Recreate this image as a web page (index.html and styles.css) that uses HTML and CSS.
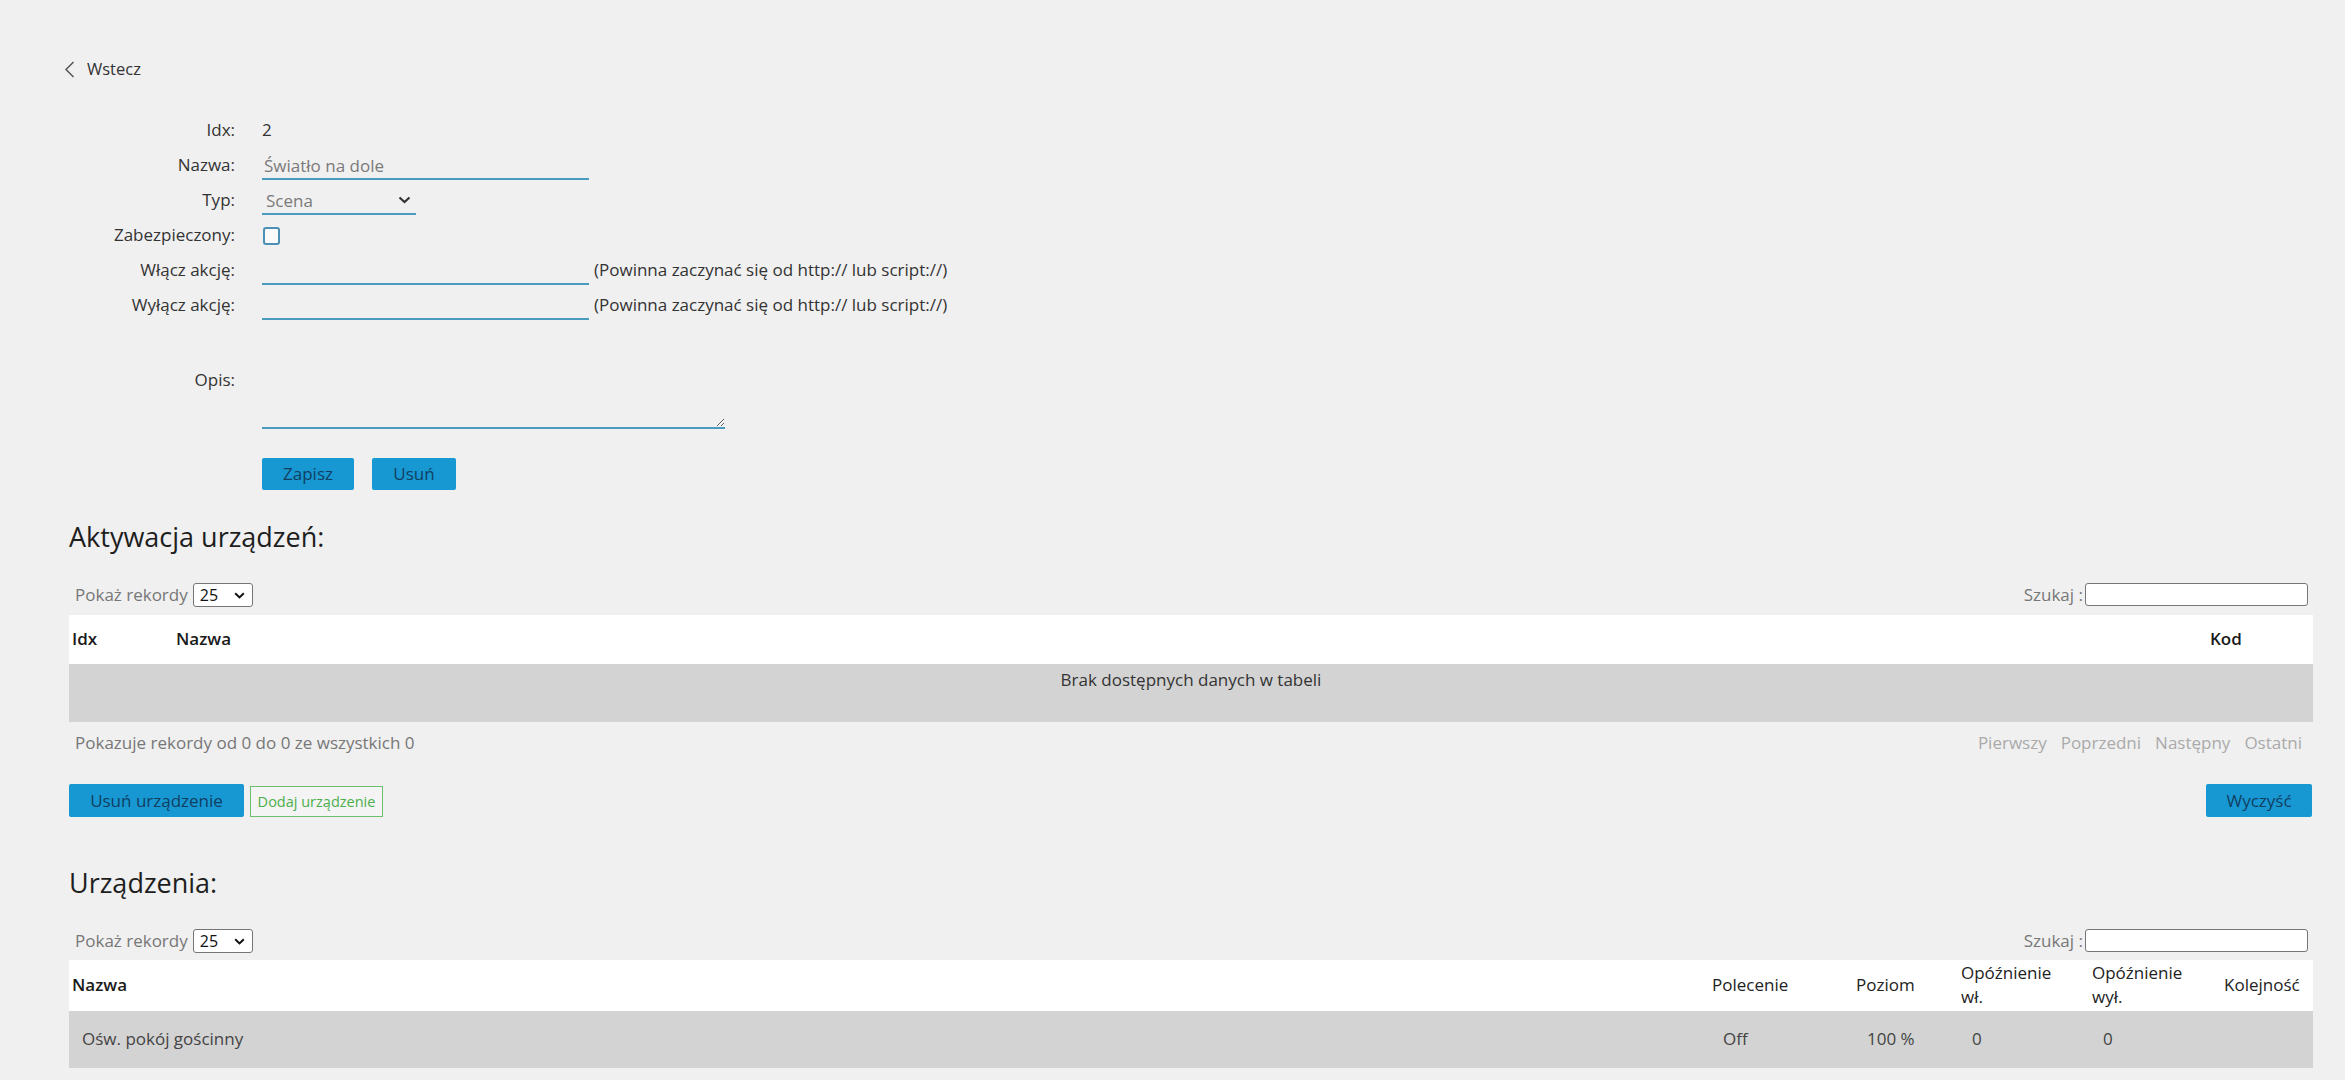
FILE: index.html
```html
<!DOCTYPE html>
<html lang="pl">
<head>
<meta charset="utf-8">
<title>Scena</title>
<link rel="stylesheet" href="styles.css">
</head>
<body>
<div class="page">
  <a class="back" href="#">
    <svg class="back-icon" width="11" height="17" viewBox="0 0 11 17"><path d="M9.5 1 L2 8.5 L9.5 16" fill="none" stroke="#555" stroke-width="1.5"/></svg>
    <span>Wstecz</span>
  </a>

  <div class="form">
    <div class="lbl">Idx:</div>
    <div class="val">2</div>

    <div class="lbl">Nazwa:</div>
    <div class="val"><input class="line-input" type="text" value="Światło na dole"></div>

    <div class="lbl">Typ:</div>
    <div class="val">
      <span class="sel-wrap">
        <select class="line-select"><option>Scena</option><option>Grupa</option></select>
        <svg class="sel-chev" width="13" height="8" viewBox="0 0 13 8"><path d="M1.5 1.5 L6.5 6 L11.5 1.5" fill="none" stroke="#333" stroke-width="2.2"/></svg>
      </span>
    </div>

    <div class="lbl">Zabezpieczony:</div>
    <div class="val"><span class="checkbox"></span></div>

    <div class="lbl">Włącz akcję:</div>
    <div class="val"><input class="line-input" type="text"><span class="hint">(Powinna zaczynać się od http:// lub script://)</span></div>

    <div class="lbl">Wyłącz akcję:</div>
    <div class="val"><input class="line-input" type="text"><span class="hint">(Powinna zaczynać się od http:// lub script://)</span></div>

    <div class="lbl lbl-opis">Opis:</div>
    <div class="val val-opis"><textarea class="opis"></textarea></div>

    <div class="actions">
      <button class="btn btn-save">Zapisz</button>
      <button class="btn btn-del">Usuń</button>
    </div>
  </div>

  <h2 class="section-title">Aktywacja urządzeń:</h2>

  <div class="dt-controls">
    <div class="dt-length">Pokaż rekordy
      <span class="small-sel-wrap">
        <select class="small-sel"><option>25</option><option>50</option></select>
        <svg class="small-chev" width="11" height="7" viewBox="0 0 11 7"><path d="M1.2 1.2 L5.5 5.4 L9.8 1.2" fill="none" stroke="#111" stroke-width="2"/></svg>
      </span>
    </div>
    <div class="dt-search">Szukaj :<input class="search-input" type="text"></div>
  </div>

  <table class="dt dt-act">
    <colgroup><col class="c-idx"><col><col class="c-kod"></colgroup>
    <thead><tr><th>Idx</th><th>Nazwa</th><th>Kod</th></tr></thead>
    <tbody><tr><td class="empty" colspan="3">Brak dostępnych danych w tabeli</td></tr></tbody>
  </table>

  <div class="dt-footer">
    <div class="dt-info">Pokazuje rekordy od 0 do 0 ze wszystkich 0</div>
    <div class="dt-pages"><span>Pierwszy</span><span>Poprzedni</span><span>Następny</span><span>Ostatni</span></div>
  </div>

  <div class="device-actions">
    <div class="left-actions">
      <button class="btn btn-remove-dev">Usuń urządzenie</button>
      <button class="btn-outline">Dodaj urządzenie</button>
    </div>
    <button class="btn btn-clear">Wyczyść</button>
  </div>

  <h2 class="section-title title-devices">Urządzenia:</h2>

  <div class="dt-controls">
    <div class="dt-length">Pokaż rekordy
      <span class="small-sel-wrap">
        <select class="small-sel"><option>25</option><option>50</option></select>
        <svg class="small-chev" width="11" height="7" viewBox="0 0 11 7"><path d="M1.2 1.2 L5.5 5.4 L9.8 1.2" fill="none" stroke="#111" stroke-width="2"/></svg>
      </span>
    </div>
    <div class="dt-search">Szukaj :<input class="search-input" type="text"></div>
  </div>

  <table class="dt dt-dev">
    <colgroup>
      <col><col class="c-cmd"><col class="c-lvl"><col class="c-on"><col class="c-off"><col class="c-ord">
    </colgroup>
    <thead>
      <tr><th class="sorted">Nazwa</th><th>Polecenie</th><th>Poziom</th><th>Opóźnienie<br>wł.</th><th>Opóźnienie<br>wył.</th><th>Kolejność</th></tr>
    </thead>
    <tbody>
      <tr><td class="first">Ośw. pokój gościnny</td><td>Off</td><td>100 %</td><td>0</td><td>0</td><td></td></tr>
    </tbody>
  </table>
</div>
</body>
</html>
```
FILE: styles.css
```css
html, body {
  margin: 0;
  padding: 0;
}
body {
  background: #f0f0f0;
  font-family: "Open Sans", "Liberation Sans", sans-serif;
  font-size: 17px;
  line-height: 24px;
  color: #333;
}
.page {
  padding: 57px 32px 0 69px;
}

/* back link */
.back {
  display: inline-flex;
  align-items: center;
  gap: 12px;
  margin-left: -5px;
  color: #333;
  text-decoration: none;
  font-size: 16.5px;
}
.back-icon { display: block; }

/* form */
.form {
  margin-top: 29px;
  display: grid;
  grid-template-columns: 166px 1fr;
  grid-template-rows: repeat(6, 35px) auto auto;
  column-gap: 27px;
  align-items: center;
}
.lbl {
  text-align: right;
  color: #333;
}
.val {
  display: flex;
  align-items: center;
  color: #333;
}
.line-input {
  box-sizing: border-box;
  width: 327px;
  height: 29px;
  padding: 2px 2px 0;
  border: none;
  border-bottom: 2px solid #4b9bbd;
  background: transparent;
  font-family: inherit;
  font-size: 17px;
  color: #7a7a7a;
  outline: none;
}
.hint {
  margin-left: 5px;
  color: #333;
}
.sel-wrap {
  position: relative;
  display: inline-block;
}
.line-select {
  -webkit-appearance: none;
  appearance: none;
  box-sizing: border-box;
  width: 154px;
  height: 29px;
  padding: 2px 0 0 4px;
  border: none;
  border-bottom: 2px solid #4b9bbd;
  border-radius: 0;
  background: transparent;
  font-family: inherit;
  font-size: 17px;
  color: #7a7a7a;
  outline: none;
}
.sel-chev {
  position: absolute;
  left: 136px;
  top: 10px;
  pointer-events: none;
}
.checkbox {
  box-sizing: border-box;
  display: block;
  width: 17px;
  height: 18px;
  margin-left: 1px;
  margin-top: 1px;
  border: 2px solid #4a8fb5;
  border-radius: 3px;
  background: #fafafa;
}
.lbl-opis {
  align-self: start;
  margin-top: 45px;
}
.val-opis {
  align-self: start;
  margin-top: 43px;
}
.opis {
  box-sizing: border-box;
  width: 463px;
  height: 63px;
  border: none;
  border-bottom: 2px solid #4b9bbd;
  background: transparent;
  font-family: inherit;
  font-size: 17px;
  outline: none;
  display: block;
}
.actions {
  grid-column: 2;
  margin-top: 29px;
  display: flex;
  gap: 18px;
}

/* buttons */
.btn {
  box-sizing: border-box;
  height: 32px;
  border: none;
  border-radius: 2px;
  background: #1898d2;
  color: #103f62;
  font-family: inherit;
  font-size: 17px;
  line-height: 32px;
  padding: 0;
  cursor: pointer;
}
.btn-save { width: 92px; }
.btn-del { width: 84px; }

/* section titles */
.section-title {
  margin: 29px 0 0;
  font-size: 27px;
  line-height: 36px;
  font-weight: 500;
  color: #1e1e1e;
}
.title-devices {
  margin-top: 48px;
}

/* datatable controls */
.dt-controls {
  margin-top: 28px;
  height: 24px;
  display: flex;
  justify-content: space-between;
  align-items: center;
}
.dt-length {
  padding-left: 6px;
  color: #777;
  display: flex;
  align-items: center;
}
.small-sel-wrap {
  position: relative;
  display: inline-block;
  margin-left: 5px;
}
.small-sel {
  -webkit-appearance: none;
  appearance: none;
  box-sizing: border-box;
  display: block;
  width: 60px;
  height: 24px;
  padding: 0 0 0 6px;
  border: 1px solid #767676;
  border-radius: 3px;
  background: #fff;
  font-family: inherit;
  font-size: 16px;
  color: #111;
  outline: none;
}
.small-chev {
  position: absolute;
  left: 41px;
  top: 9px;
  pointer-events: none;
}
.dt-search {
  display: flex;
  align-items: center;
  color: #777;
  padding-right: 5px;
}
.search-input {
  box-sizing: border-box;
  width: 223px;
  height: 23px;
  margin-left: 2px;
  border: 1px solid #767676;
  border-radius: 3px;
  background: #fff;
  outline: none;
}

/* tables */
.dt {
  width: 100%;
  border-collapse: collapse;
  table-layout: fixed;
  margin-top: 8px;
}
.dt th {
  background: #fff;
  text-align: left;
  font-weight: 600;
  color: #1a1a1a;
  padding: 0 3px;
  vertical-align: middle;
}
.dt-act thead tr { height: 49px; }
.c-idx { width: 104px; }
.c-kod { width: 106px; }
.dt td {
  background: #d3d3d3;
  color: #444;
}
.dt td.empty {
  height: 58px;
  box-sizing: border-box;
  text-align: center;
  vertical-align: top;
  padding: 4px 0 0;
  color: #333;
}

.dt-dev { margin-top: 7px; }
.dt-dev th {
  font-weight: 400;
  color: #222;
}
.dt-dev th.sorted {
  font-weight: 600;
  color: #1a1a1a;
}
.dt-dev thead tr { height: 51px; }
.dt-dev tbody tr { height: 57px; }
.dt-dev td {
  padding: 0 0 0 14px;
  vertical-align: middle;
}
.dt-dev td.first { padding-left: 13px; }
.c-cmd { width: 144px; }
.c-lvl { width: 105px; }
.c-on { width: 131px; }
.c-off { width: 132px; }
.c-ord { width: 92px; }

/* footer */
.dt-footer {
  margin-top: 9px;
  display: flex;
  justify-content: space-between;
  align-items: center;
}
.dt-info {
  padding-left: 6px;
  color: #777;
}
.dt-pages {
  display: flex;
  gap: 14px;
  padding-right: 11px;
  color: #aaa;
}

.device-actions {
  margin-top: 29px;
  display: flex;
  justify-content: space-between;
  align-items: flex-end;
}
.left-actions {
  display: flex;
  align-items: flex-end;
  gap: 6px;
}
.btn-remove-dev {
  width: 175px;
  height: 33px;
  line-height: 33px;
}
.btn-outline {
  box-sizing: border-box;
  width: 133px;
  height: 31px;
  border: 1px solid #6cbf6c;
  border-radius: 0;
  background: #f4f4f4;
  color: #4cae4c;
  font-family: inherit;
  font-size: 14.5px;
  padding: 0;
  cursor: pointer;
}
.btn-clear {
  width: 106px;
  height: 33px;
  line-height: 33px;
  margin-right: 1px;
}
```
